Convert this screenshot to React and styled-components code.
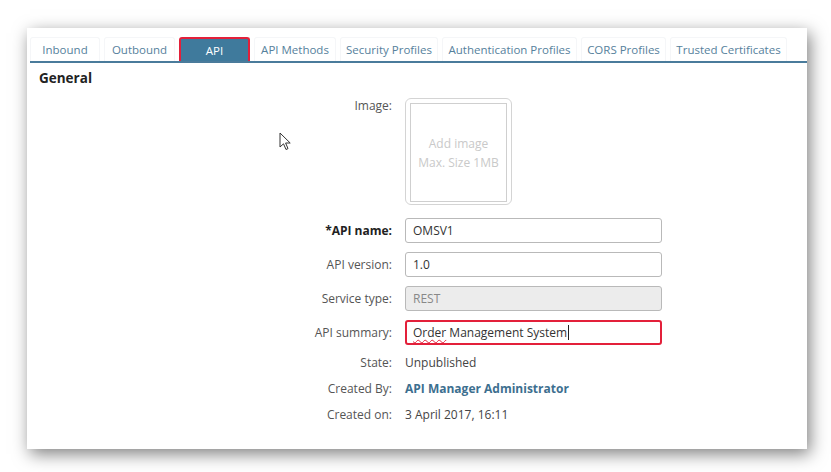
import React from 'react'
import styled, { createGlobalStyle } from 'styled-components'

const GlobalStyle = createGlobalStyle`
  html, body {
    margin: 0;
    padding: 0;
    background: #ffffff;
  }
  body {
    font-family: 'Open Sans', 'Liberation Sans', sans-serif;
  }
`

const Page = styled.div`
  width: 831px;
  height: 472px;
  padding: 28px 24px 23px 27px;
  box-sizing: border-box;
`

const Panel = styled.section`
  position: relative;
  height: 100%;
  background: #fff;
  box-shadow: 3px 5px 16px rgba(0, 0, 0, 0.5);
  padding: 9px 0 0 3px;
  box-sizing: border-box;
`

const TabBar = styled.nav`
  display: flex;
  gap: 4px;
  border-bottom: 2px solid #4a7b9b;
  height: 24px;
  align-items: stretch;
`

const Tab = styled.div`
  display: flex;
  align-items: center;
  justify-content: center;
  font-size: 11.5px;
  color: ${p => (p.active ? '#fff' : '#56819c')};
  background: ${p => (p.active ? '#3f7a9c' : '#fff')};
  border: ${p => (p.active ? '2px solid #e3203a' : '1px solid #f5f6f8')};
  border-bottom: none;
  border-radius: 3px 3px 0 0;
  width: ${p => p.w}px;
  box-sizing: border-box;
  white-space: nowrap;
`

const Heading = styled.h2`
  margin: 6px 0 0 9px;
  font-size: 13.5px;
  font-weight: 700;
  color: #222;
`

const Form = styled.div`
  display: grid;
  grid-template-columns: 353px 257px;
  column-gap: 13px;
  row-gap: 9px;
  margin: 11px 0 0 9px;
  align-items: center;
`

const Label = styled.div`
  text-align: right;
  font-size: 12px;
  line-height: ${p => (p.info ? 17 : 16)}px;
  color: ${p => (p.strong ? '#222' : '#555')};
  font-weight: ${p => (p.strong ? 700 : 400)};
  align-self: ${p => (p.top ? 'start' : 'center')};
`

const ImageBox = styled.div`
  width: 107px;
  height: 107px;
  box-sizing: border-box;
  border: 1px solid #d4d4d4;
  border-radius: 6px;
  padding: 4px;
  margin-bottom: 4px;
`

const ImageInner = styled.div`
  height: 100%;
  border: 1px solid #cfcfcf;
  display: flex;
  flex-direction: column;
  align-items: center;
  justify-content: center;
  color: #c9c9c9;
  font-size: 12px;
  line-height: 19px;
  text-align: center;
`

const Input = styled.div`
  height: 25px;
  box-sizing: border-box;
  border: ${p => (p.focused ? '2px solid #e3203a' : '1px solid #b9b9b9')};
  border-radius: 3px;
  background: ${p => (p.disabled ? '#ececec' : '#fff')};
  color: ${p => (p.disabled ? '#888' : '#333')};
  font-size: 12px;
  display: flex;
  align-items: center;
  padding: 0 ${p => (p.focused ? 6 : 7)}px;
`

const Squiggle = styled.span`
  text-decoration: underline wavy #e3203a;
  text-decoration-thickness: 1px;
  text-underline-offset: 2px;
`

const Caret = styled.span`
  display: inline-block;
  width: 1px;
  height: 15px;
  background: #222;
  margin-left: 1px;
`

const Value = styled.div`
  font-size: 12px;
  line-height: 17px;
  color: ${p => (p.link ? '#3d6f8f' : '#444')};
  font-weight: ${p => (p.link ? 700 : 400)};
`

const Pointer = styled.svg`
  position: absolute;
  left: 252px;
  top: 104px;
`

const tabs = [
  ['Inbound', 70],
  ['Outbound', 71],
  ['API', 71],
  ['API Methods', 82],
  ['Security Profiles', 98],
  ['Authentication Profiles', 135],
  ['CORS Profiles', 85],
  ['Trusted Certificates', 117]
]

export default function App() {
  return (
    <Page>
      <GlobalStyle />
      <Panel>
        <TabBar>
          {tabs.map(([name, w]) => (
            <Tab key={name} w={w} active={name === 'API'}>
              {name}
            </Tab>
          ))}
        </TabBar>
        <Heading>General</Heading>
        <Form>
          <Label top>Image:</Label>
          <ImageBox>
            <ImageInner>
              <span>Add image</span>
              <span>Max. Size 1MB</span>
            </ImageInner>
          </ImageBox>

          <Label strong>*API name:</Label>
          <Input>OMSV1</Input>

          <Label>API version:</Label>
          <Input>1.0</Input>

          <Label>Service type:</Label>
          <Input disabled>REST</Input>

          <Label>API summary:</Label>
          <Input focused>
            <Squiggle>Order</Squiggle>&nbsp;Management System
            <Caret />
          </Input>

          <Label info>State:</Label>
          <Value>Unpublished</Value>

          <Label info>Created By:</Label>
          <Value link>API Manager Administrator</Value>

          <Label info>Created on:</Label>
          <Value>3 April 2017, 16:11</Value>
        </Form>
        <Pointer width="13" height="20" viewBox="0 0 13 20">
          <path
            d="M1 1 L1 15 L4.5 11.8 L7 17.5 L9 16.6 L6.6 11 L11.2 11 Z"
            fill="#fff"
            stroke="#333"
            strokeWidth="1"
            strokeLinejoin="round"
          />
        </Pointer>
      </Panel>
    </Page>
  )
}
